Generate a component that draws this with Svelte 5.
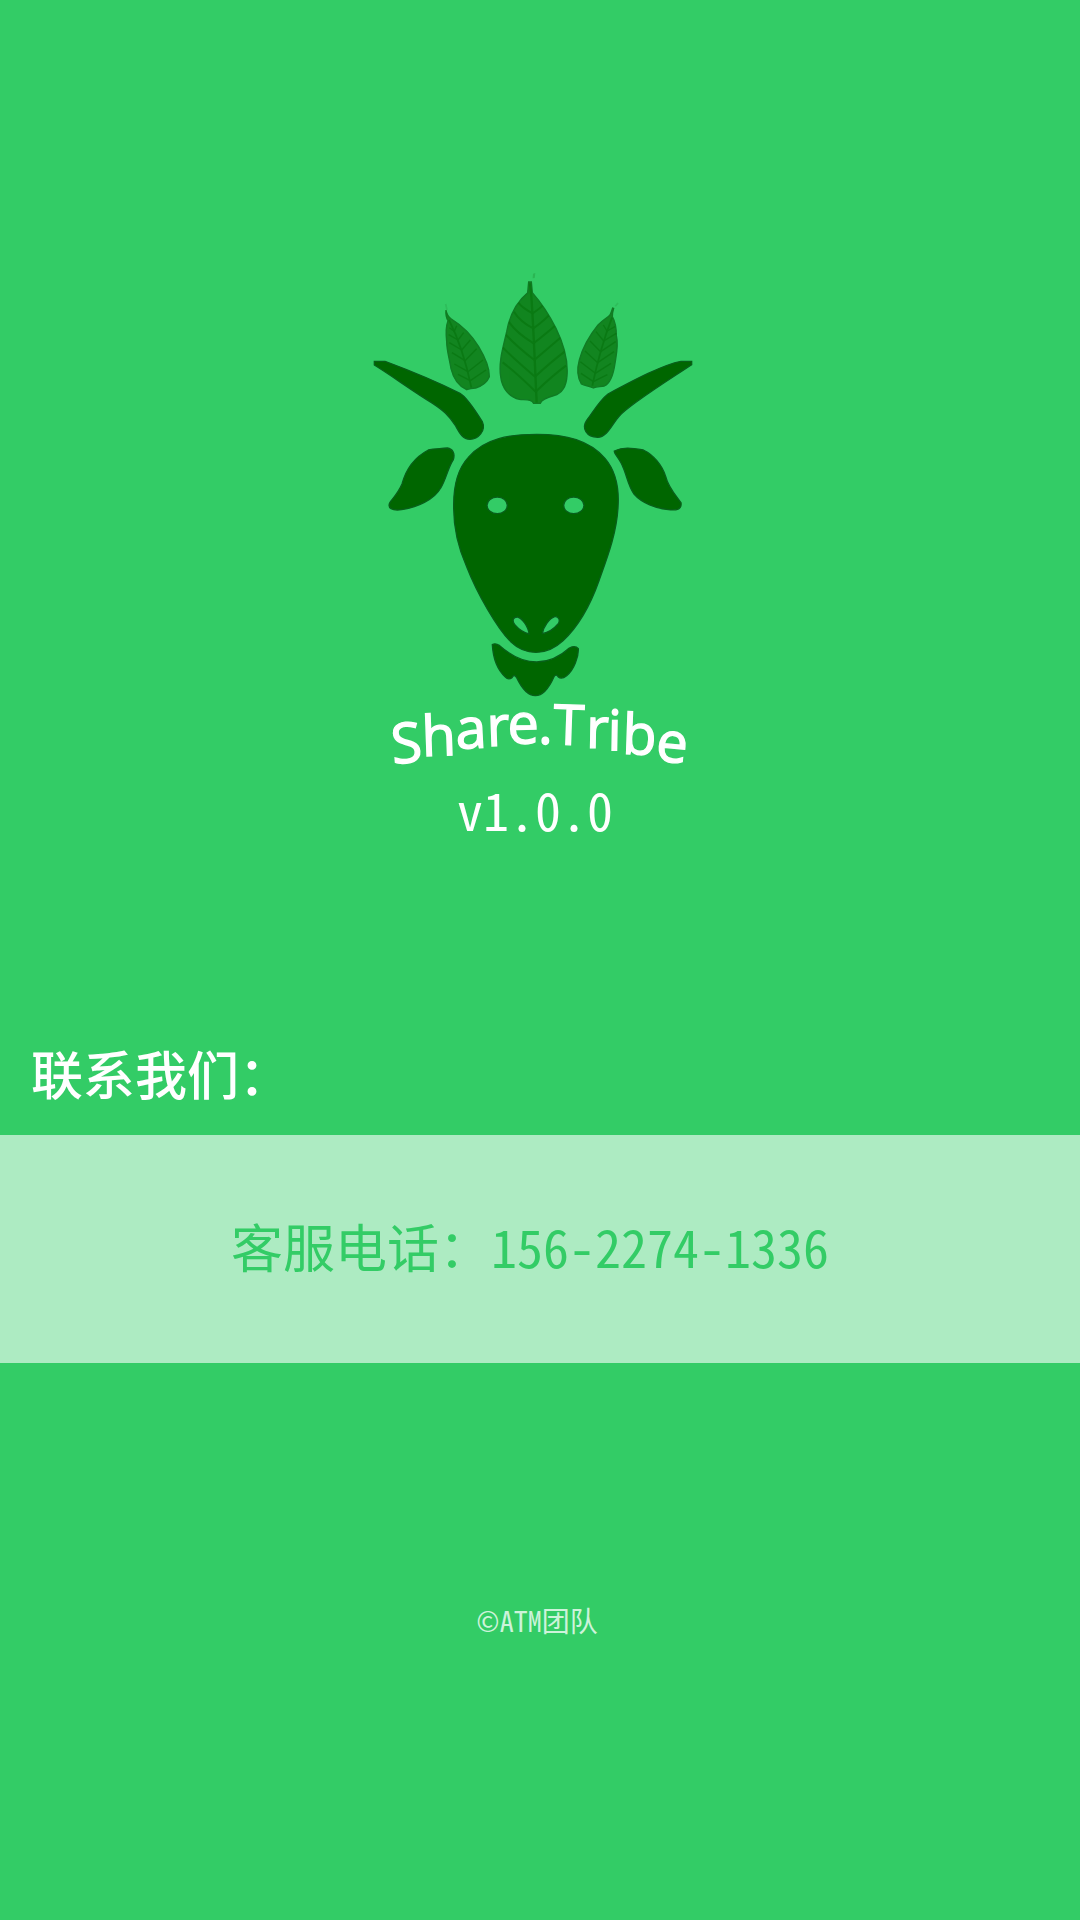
<script>
  const version = 'v1.0.0';
  const phone = '156-2274-1336';
</script>

<main>
  <header>
    <svg class="logo" viewBox="0 0 1050 1560" role="img" aria-label="Share.Tribe">
      <defs>
        <path id="leaf" d="M506 66 H514 L517 98 C545 130 568 165 588 205 C610 250 625 300 621 348 C619 380 606 400 582 407 C560 413 545 418 541 430 H521 C515 418 500 420 478 418 C448 412 426 385 422 350 C415 305 430 260 440 215 C449 165 470 125 503 98 Z" />
        <clipPath id="leaf-edge"><use href="#leaf" /></clipPath>
      </defs>
      <use href="#leaf" class="leaf" />
      <g class="veins" fill="none" clip-path="url(#leaf-edge)">
        <path d="M510 70 L514 110 C520 190 524 300 530 428" stroke-width="7" />
        <path d="M518 160 Q488 145 475 128 M520 205 Q480 185 462 155 M521 250 Q470 220 446 185 M523 300 Q465 255 434 220 M525 350 Q460 295 428 262 M527 395 Q465 335 428 307 M518 160 Q540 145 552 133 M520 205 Q555 180 572 160 M521 250 Q565 215 588 195 M523 300 Q575 255 605 230 M525 350 Q580 300 618 272 M527 395 Q580 345 618 317" stroke-width="6" />
      </g>
      <path class="wisp" d="M519 41 L526 39 L524 54 L518 55 Z" />
      <path class="leaf" d="M258 150 Q260 166 274 177 C305 196 335 225 356 260 C374 290 389 323 388 350 C382 366 370 376 347 384 C338 384 329 385 320 389 C297 379 280 355 273 326 C269 300 260 270 260 245 C257 218 258 198 264 182 Q256 168 258 150 Z" />
      <g class="veins" fill="none">
        <path d="M267 180 C300 245 320 315 334 382" stroke-width="5" />
        <path d="M283 214 L268 203 M294 240 L266 224 M305 270 L268 248 M315 302 L276 278 M324 335 L283 312 M331 362 L294 343 M283 214 L290 197 M294 240 L311 218 M305 270 L331 240 M315 302 L350 266 M324 335 L369 300 M331 362 L378 330" stroke-width="4" />
      </g>
      <path class="leaf" d="M761 145 Q757 158 757 170 C766 186 769 205 769 226 C776 255 769 285 765 310 C760 345 750 370 733 378 C720 381 711 378 700 384 C685 378 675 377 664 372 C651 350 651 325 658 300 C667 265 690 225 714 195 C728 180 743 173 750 165 Q755 155 758 144 Z" />
      <g class="veins" fill="none">
        <path d="M756 173 C730 240 711 310 697 377" stroke-width="5" />
        <path d="M741 213 L765 200 M731 243 L769 220 M722 275 L767 245 M713 308 L762 275 M706 340 L753 310 M741 213 L730 195 M731 243 L708 215 M722 275 L690 243 M713 308 L675 273 M706 340 L661 305 M700 365 L663 340 M700 365 L742 344" stroke-width="4" />
      </g>
      <path class="wisp faint" d="M257 132 L261 150 M774 129 L766 139" />
      <g class="goat">
        <path d="M43 304 H75 C145 330 220 360 300 400 C322 413 350 458 367 485 C379 512 354 538 330 538 C307 537 298 518 287 498 C266 464 248 450 218 430 C160 395 95 347 43 315 Z" />
        <path d="M995 304 H963 C910 314 826 358 744 402 C715 425 696 462 680 481 C664 504 679 531 713 532 C742 532 756 492 778 468 C805 436 904 374 995 314 Z" />
        <g transform="translate(0 480)">
          <path fill-rule="evenodd" d="M530 43 C620 43 688 62 735 115 C769 155 778 203 774 262 C770 340 742 412 717 482 C700 530 665 610 609 662 C583 686 553 697 528 697 C500 697 475 687 453 666 C412 626 351 520 320 440 C294 382 280 318 281 255 C281 200 290 150 325 112 C375 54 450 43 530 43 Z M412 231 C395 231 381 242 381 256 C381 270 395 281 412 281 C429 281 442 270 442 256 C442 242 429 231 412 231 Z M641 231 C624 231 611 242 611 256 C611 270 624 281 641 281 C658 281 672 270 672 256 C672 242 658 231 641 231 Z M473 591 C459 590 455 603 465 615 C477 629 491 638 507 642 C506 623 487 594 473 591 Z M584 590 C567 596 549 622 547 641 C565 638 583 625 594 612 C602 602 596 588 584 590 Z" />
          <path d="M205 90 C225 85 243 87 262 84 C278 87 286 99 280 119 C263 145 257 182 242 204 C223 239 170 263 125 269 C96 273 81 264 90 247 C102 231 116 216 126 192 C135 158 156 116 205 90 Z" />
          <path d="M763 93 C790 80 815 84 850 90 C880 104 906 135 917 169 C924 200 945 224 963 248 C966 268 950 272 925 269 C890 266 845 249 822 222 C805 199 801 169 789 142 C782 119 761 101 763 93 Z" />
          <path d="M397 674 Q406 668 419 677 C455 709 490 726 530 726 C574 725 602 708 628 684 Q646 675 655 686 C656 710 642 750 620 767 Q605 779 595 771 Q589 760 582 770 C570 797 550 827 526 827 C502 827 481 796 470 773 Q462 760 456 773 Q445 781 436 771 C411 748 399 710 397 674 Z" />
        </g>
      </g>
      <text
        class="wordmark"
        x="98 187 289 382 443 534 578 677 742 785 885"
        y="1512 1489 1467 1459 1451 1451 1453 1463 1471 1481 1502"
        rotate="-5 -2 -3 -2 -1 0 2 1 1 2 5">Share.Tribe</text>
    </svg>
    <p class="version">{version}</p>
  </header>

  <section>
    <h1>联系我们：</h1>
    <p class="phone">客服电话：{phone}</p>
  </section>

  <footer>©ATM团队</footer>
</main>

<style>
  :global(body) {
    margin: 0;
    background: #33cc66;
  }

  main {
    min-height: 100vh;
    box-sizing: border-box;
    padding-top: 260px;
    background: #33cc66;
    color: #fff;
    font-family: 'Noto Sans CJK SC', sans-serif;
    font-size: 52px;
    line-height: 58px;
    font-feature-settings: 'hwid';
  }

  header {
    display: flex;
    flex-direction: column;
    align-items: center;
    padding-right: 10px;
  }

  p,
  h1 {
    margin: 0;
    font-size: 52px;
    font-weight: 400;
  }

  .logo {
    display: block;
    width: 350px;
    height: auto;
    overflow: visible;
  }

  .goat {
    fill: #006600;
    stroke: #08601a;
    stroke-width: 4;
  }

  .leaf {
    fill: #128520;
    stroke: #117b24;
    stroke-width: 4;
  }

  .veins {
    stroke: #08750f;
    opacity: 0.7;
  }

  .wisp {
    fill: #2bb653;
  }

  .faint {
    stroke: #2fbd5b;
    stroke-width: 5;
  }

  .wordmark {
    fill: #fff;
    stroke: #fff;
    stroke-width: 4;
    font-family: 'Open Sans', sans-serif;
    font-size: 168px;
    font-feature-settings: normal;
  }

  section {
    margin-top: 206px;
  }

  h1 {
    padding: 0 31px 33px;
    font-weight: 500;
  }

  .phone {
    padding: 82px 20px 88px 0;
    background: #adebc2;
    color: #33cc66;
    text-align: center;
  }

  footer {
    padding: 237px 6px 0 0;
    color: #cdf3da;
    font-size: 28px;
    line-height: 40px;
    text-align: center;
  }
</style>
